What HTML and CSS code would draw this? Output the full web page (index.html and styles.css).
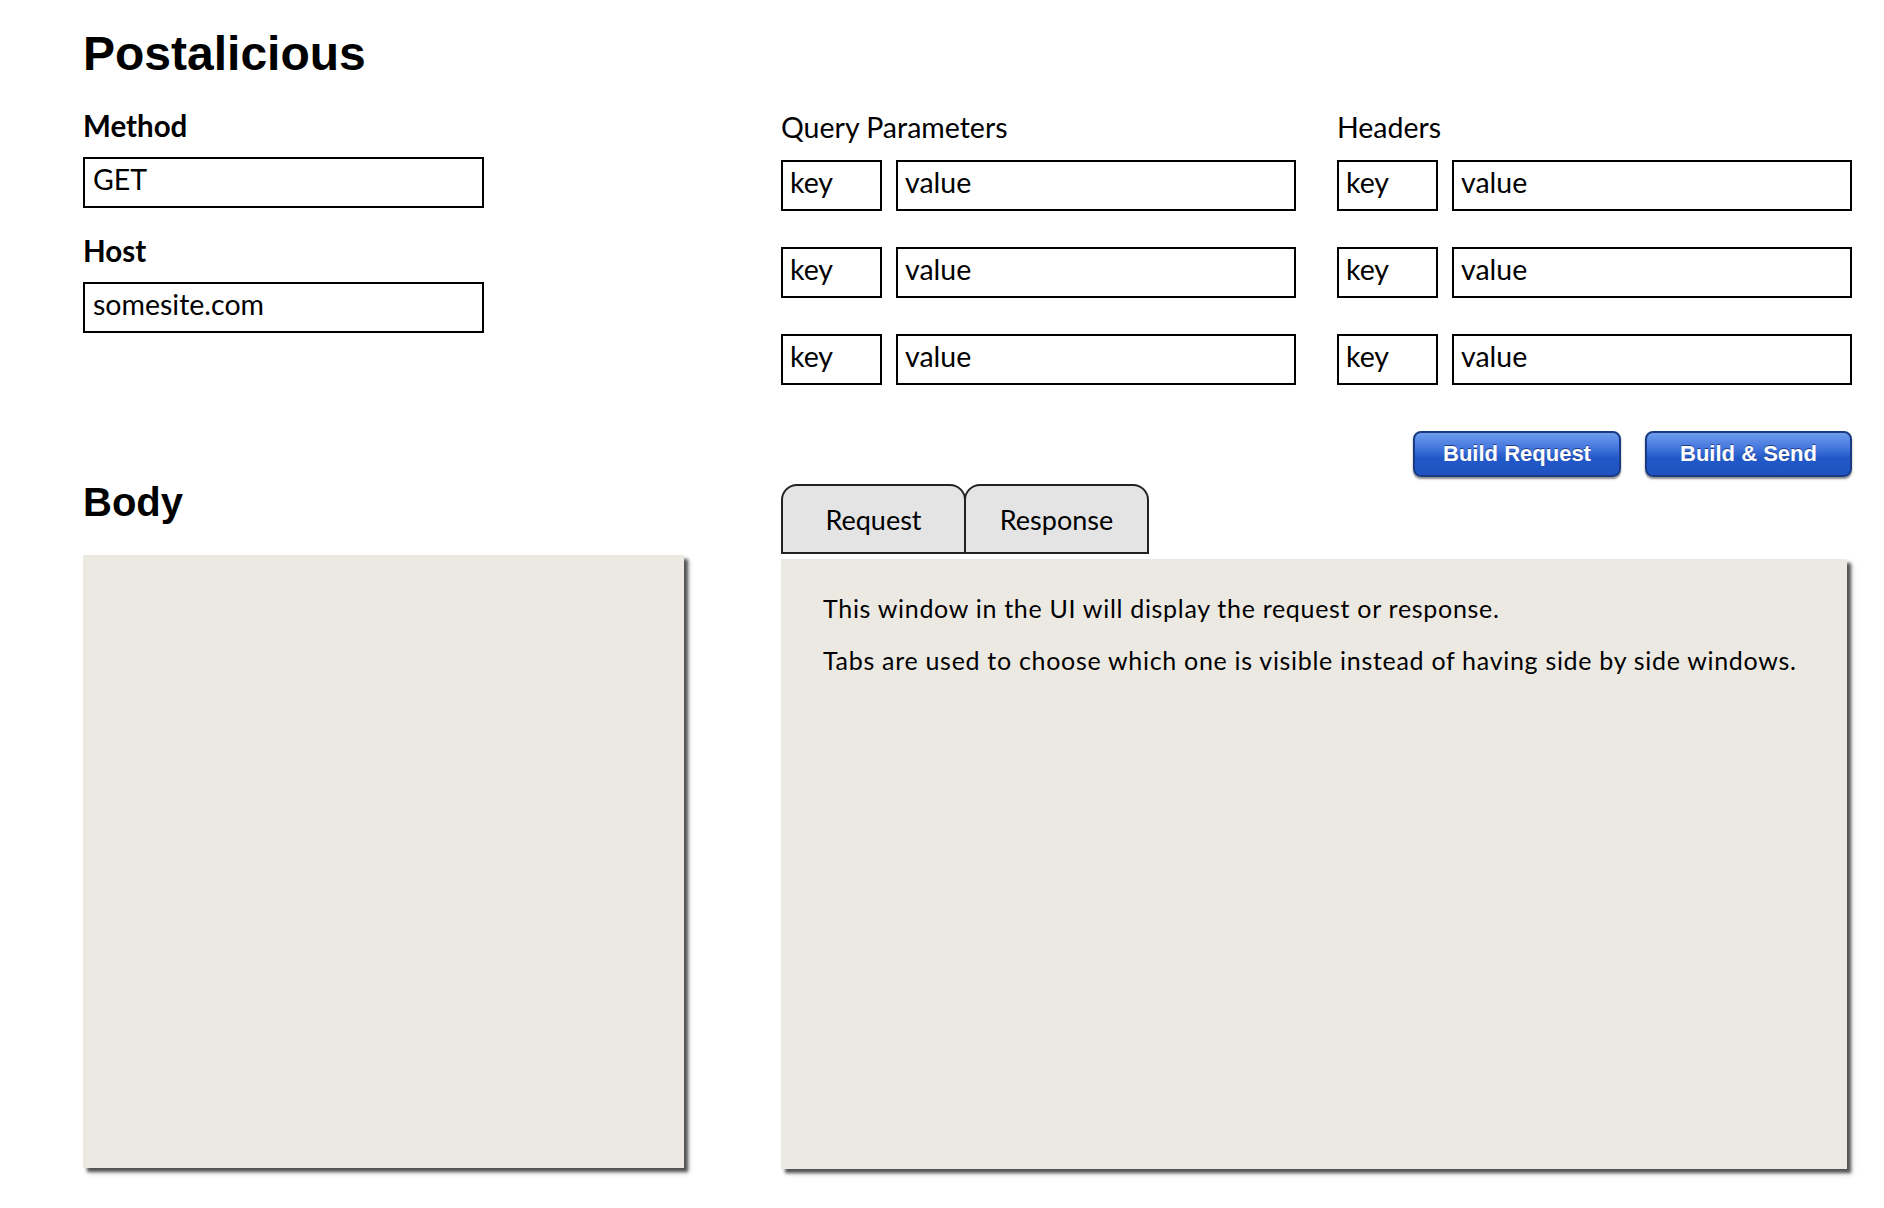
FILE: index.html
```html
<!DOCTYPE html>
<html lang="en">
<head>
<meta charset="utf-8">
<title>Postalicious</title>
<link rel="stylesheet" href="styles.css">
</head>
<body>
<div class="page">
  <h1 class="title">Postalicious</h1>

  <div class="top">
    <div class="col col-main">
      <div class="field-label">Method</div>
      <div class="input wide">GET</div>
      <div class="field-label">Host</div>
      <div class="input wide">somesite.com</div>
    </div>

    <div class="col">
      <div class="group-label">Query Parameters</div>
      <div class="kv-list">
        <div class="kv"><div class="input key">key</div><div class="input value">value</div></div>
        <div class="kv"><div class="input key">key</div><div class="input value">value</div></div>
        <div class="kv"><div class="input key">key</div><div class="input value">value</div></div>
      </div>
    </div>

    <div class="col">
      <div class="group-label">Headers</div>
      <div class="kv-list">
        <div class="kv"><div class="input key">key</div><div class="input value">value</div></div>
        <div class="kv"><div class="input key">key</div><div class="input value">value</div></div>
        <div class="kv"><div class="input key">key</div><div class="input value">value</div></div>
      </div>
      <div class="actions">
        <button class="btn btn-build">Build Request</button>
        <button class="btn btn-send">Build &amp; Send</button>
      </div>
    </div>
  </div>

  <div class="bottom">
    <div class="body-col">
      <h2 class="body-title">Body</h2>
      <div class="body-box"></div>
    </div>
    <div class="view-col">
      <div class="tabs">
        <div class="tab">Request</div>
        <div class="tab">Response</div>
      </div>
      <div class="panel">
        <p>This window in the UI will display the request or response.</p>
        <p>Tabs are used to choose which one is visible instead of having side by side windows.</p>
      </div>
    </div>
  </div>
</div>
</body>
</html>
```

FILE: styles.css
```css
* { box-sizing: border-box; }

html, body {
  min-height: 100%;
}

body {
  margin: 0;
  background: #ffffff;
  color: #000;
  font-family: "Lato", "Noto Sans", sans-serif;
}

.page {
  padding: 0 0 30px 83px;
}

.title {
  margin: 26px 0 0;
  font-family: "Liberation Sans", Arial, sans-serif;
  font-weight: 700;
  font-size: 48px;
  line-height: 56px;
}

.top {
  display: grid;
  grid-template-columns: 657px 515px 515px;
  column-gap: 41px;
  margin-top: 28px;
}

.col {
  display: flex;
  flex-direction: column;
}

.field-label {
  font-weight: 700;
  font-size: 29.5px;
  line-height: 32px;
  margin-bottom: 15px;
}

.group-label {
  font-size: 28.5px;
  line-height: 34px;
  margin-bottom: 16px;
}

.input {
  height: 51px;
  border: 2px solid #000;
  background: #fff;
  padding: 4px 8px;
  font-size: 28.5px;
  line-height: 32px;
  white-space: nowrap;
}

.wide {
  width: 401px;
  margin-bottom: 27px;
}

.kv-list {
  display: flex;
  flex-direction: column;
  gap: 36px;
}

.kv {
  display: flex;
  gap: 14px;
}

.key { width: 101px; padding-left: 7px; }
.value { width: 400px; padding-left: 7px; }

.actions {
  display: flex;
  justify-content: flex-end;
  gap: 24px;
  margin-top: 46px;
}

.btn {
  width: 208px;
  height: 46px;
  border: 2px solid #1b3a84;
  border-radius: 8px;
  background: linear-gradient(to bottom, #6f9cec 0%, #4578de 35%, #2158c8 60%, #1f53c0 100%);
  box-shadow: 0 2px 2px rgba(0, 0, 0, 0.45);
  color: #fff;
  font-family: "Liberation Sans", Arial, sans-serif;
  font-weight: 700;
  font-size: 22px;
  text-shadow: 0 -1px 0 rgba(0, 0, 40, 0.5);
  padding: 0;
}

.btn-send { width: 207px; }

.bottom {
  display: flex;
  margin-top: 7px;
}

.body-col {
  width: 698px;
}

.body-title {
  margin: 0 0 35px;
  font-family: "Liberation Sans", Arial, sans-serif;
  font-weight: 700;
  font-size: 40px;
  line-height: 36px;
}

.body-box {
  width: 601px;
  height: 613px;
  background: #ece9e3;
  box-shadow: 4px 4px 3px rgba(0, 0, 0, 0.62), 5px 5px 6px rgba(0, 0, 0, 0.15);
}

.view-col {
  width: 1067px;
}

.tabs {
  display: flex;
  height: 70px;
}

.tab {
  width: 185px;
  height: 70px;
  border: 2px solid #222;
  border-radius: 16px 16px 0 0;
  background: #e4e4e4;
  display: flex;
  align-items: center;
  justify-content: center;
  font-size: 27px;
  line-height: 31px;
  padding-top: 1px;
}

.tab + .tab {
  margin-left: -2px;
}

.panel {
  margin-top: 5px;
  width: 1066px;
  height: 610px;
  background: #ece9e3;
  box-shadow: 4px 4px 3px rgba(0, 0, 0, 0.62), 5px 5px 6px rgba(0, 0, 0, 0.15);
  padding: 34px 42px;
  font-size: 25px;
  line-height: 30px;
  letter-spacing: 0.7px;
}

.panel p {
  margin: 0;
}

.panel p + p {
  margin-top: 22px;
}
```
